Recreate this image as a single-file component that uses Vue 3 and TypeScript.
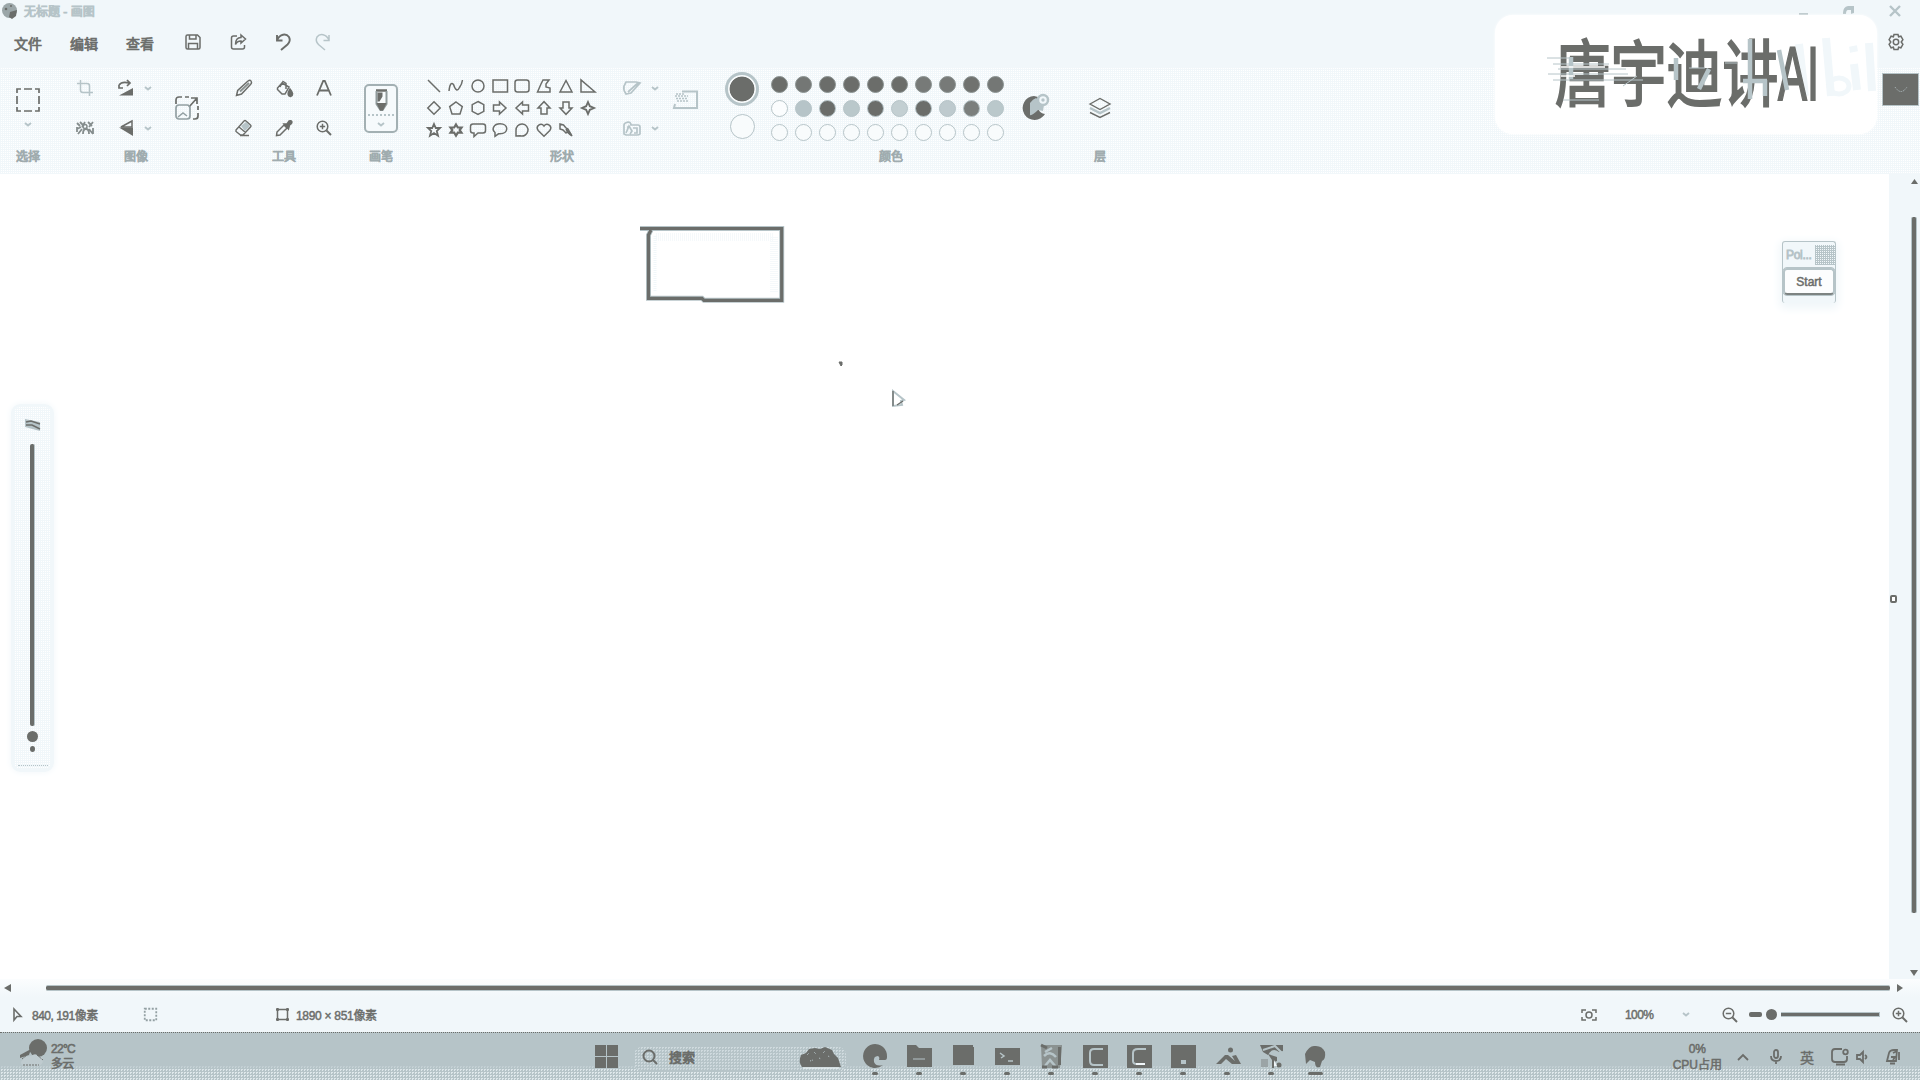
<script setup lang="ts">
interface Icon { w: number; h: number; body: string }

const mag = '<circle cx="6.5" cy="6.5" r="5.3"/><path d="M10.5 10.5L15 15" stroke-width="2"/>'
const dark = '#6b6d6a'
const soft = '#b6c4c8'
const pale = '#f1f7fa'

const icons: Record<string, Icon> = {
  save: { w: 16, h: 16, body: '<path d="M2.5 1h10l2.5 2.500v10q0 1.500-1.500 1.500h-11Q1 15 1 13.500v-11Q1 1 2.500 1zM4.500 1v4h6.500v-4M3.500 15V9.500h9V15"/>' },
  share: { w: 17, h: 16, body: '<path d="M7 2H3.500Q1.500 2 1.500 4v9q0 2 2 2h9q2 0 2-2v-2"/><path d="M11 1l4.500 4L11 9V7Q7 7 5.500 10.500 5.500 3.500 11 3.500z"/>' },
  undo: { w: 16, h: 18, body: '<path d="M2 2v5.500h5.500M2 7C5 1 11 0 14 4q2 4-1.500 7.500L6 17" stroke-width="1.900"/>' },
  redo: { w: 16, h: 18, body: '<path d="M14 2v5.500H8.500M14 7C11 1 5 0 2 4q-2 4 1.500 7.500L10 17"/>' },
  gear: { w: 18, h: 18, body: '<path d="M7 1.500h4l.6 2.300 2.300-.6 2 3.400L14.200 9l1.700 2.400-2 3.400-2.300-.6-.6 2.300H7l-.6-2.300-2.300.6-2-3.400L3.800 9 2.100 6.600l2-3.400 2.300.6z" stroke-width="1.500"/><circle cx="9" cy="9" r="2.700"/>' },
  select: { w: 24, h: 24, body: '<path d="M1 5V1h4M8 1h8M19 1h4v4M23 8v8M23 19v4h-4M16 23H8M5 23H1v-4M1 16V8" stroke-width="1.700"/>' },
  chev: { w: 8, h: 5, body: '<path d="M1 1l3 2.500L7 1"/>' },
  crop: { w: 16, h: 16, body: '<path d="M0 3.500h10q2.500 0 2.500 2.500v10M3.500 0v10q0 2.500 2.500 2.500h10"/>' },
  rotate: { w: 16, h: 16, body: '<path d="M1 5Q4 1 11 3M1 5v3h4M9 0l3 3-3 3" stroke-width="1.700"/><path d="M1 15.500h14V8z" fill="currentColor" stroke="none"/>' },
  nobg: { w: 18, h: 14, body: '<path d="M1 2l3 3M4 1l4 4M9 1l-3 5M12 1l4 4M17 1l-4 5M1 8l4-2M2 13l4-5M7 13q0-5 3-5t3 5M13 8l4 5M1 6v5M17 7v6" stroke-width="1.800"/><circle cx="9" cy="5.500" r="2"/>' },
  flip: { w: 15, h: 16, body: '<path d="M13 1L2 7h11z"/><path d="M0 7.500h14V16z" fill="currentColor" stroke="none"/>' },
  resize: { w: 24, h: 24, body: '<path d="M1 8V4q0-3 3-3h3M10 1h4M23 10v4M23 17v3q0 3-3 3h-2M14 11l8-9M16 2h6v6" stroke-width="1.700"/><rect x="1" y="9" width="14" height="14" rx="3" stroke="#93a0a3" stroke-width="1.700"/><path d="M3 21l5-4 4 3" stroke="#93a0a3"/>' },
  pencil: { w: 18, h: 18, body: '<path d="M1.500 16.500l1.200-5L13 2q3-2 3.500 1.500 0 1-.8 1.700L6.500 15z" stroke-width="1.500"/><path d="M5 12.500L14 4" stroke="#8b9392" stroke-width="2"/>' },
  bucket: { w: 17, h: 17, body: '<path d="M6 3l7 4-4 7H6L1.500 9.500V8zM4 7l3-5.500 3 2V9" stroke-width="1.500"/><path d="M14 9q5 6 .500 7.500-4.500-1-.500-7.500z" fill="currentColor"/>' },
  letter: { w: 16, h: 16, body: '<path d="M1 15.500L7.200 1h1.600L15 15.500M3.500 10.500h9" stroke-width="1.800"/>' },
  eraser: { w: 18, h: 18, body: '<path d="M6 7l5-4 4 4-5 5z" fill="#b6c4c8" stroke="none"/><path d="M1 11l8-9q1-1 2 0l4.500 4q1 1 0 2L8 16H5.500L1 12.500zM4 8l6.500 5.500M5 16.500h9" stroke-width="1.400"/>' },
  picker: { w: 18, h: 18, body: '<path d="M1.500 16.500l.5-3.500L9 6l3 3-7 7z"/><path d="M9 5l3 0 2-3q2-1 3 1 0 2-2.500 3l-1 4z" fill="currentColor"/>' },
  zoomin: { w: 16, h: 16, body: mag + '<path d="M3.800 6.500h5.400M6.500 3.800v5.400" stroke-width="1.500"/>' },
  zoomout: { w: 16, h: 16, body: mag + '<path d="M3.800 6.500h5.400"/>' },
  brush: { w: 15, h: 22, body: '<path d="M2 1.500h11" stroke-width="2.500"/><path d="M2.500 2v13L6.500 21h2l4-6V2" stroke="#8f9a9b" stroke-width="2"/><path d="M3.500 3.500h5v4l-3 5h-2zM2.500 14h10L9 21.500H6z" fill="currentColor" stroke="none"/>' },
  outline: { w: 18, h: 16, body: '<path d="M3 2h10l4 1-9 10-5 1Q0 10 1 6zM5 12l10-9" stroke-width="1.700"/>' },
  fill: { w: 18, h: 15, body: '<path d="M1 13V4q0-2 4-3 3 0 3 3h7q2 0 2 2v7q-1 1-3 1H3zM3 12l3-7 3 5-2 3M10 7h4v5h-3M4 6h3" stroke-width="1.700"/>' },
  size: { w: 26, h: 20, body: '<path d="M9 1.500h15v16.500H1l1-4" stroke-width="2"/><path d="M2 6h13M3 8.500h12M4 11h11M3 4h8" stroke-dasharray="2 1"/>' },
  edit: { w: 30, h: 30, body: '<path d="M14 3a12 12 0 1 0 11 18q-5-1-6-4V8q-2-1-1-4z" fill="#6b6d6a" stroke="none"/><path d="M10 22V10q3-4 6-5l8 7-1 6-5-1q-6 6-8 5z" fill="#b6c4c8" stroke="none"/><circle cx="23" cy="7" r="5" stroke="#b6c4c8" fill="#f1f7fa" stroke-width="2.500"/><circle cx="23" cy="7" r="1.700" fill="#b6c4c8" stroke="none"/>' },
  layers: { w: 22, h: 22, body: '<path d="M1 11l10 5 10-5" stroke="#b6c4c8" stroke-width="2.500"/><path d="M1 7l10-5.500L21 7l-10 5.500z" stroke-width="1.400"/><path d="M1 15.500l10 5 10-5" stroke-width="1.400"/>' },
  pointer: { w: 9, h: 13, body: '<path d="M1 1v11l3-3.500h4z" stroke-width="1.600"/>' },
  dotted: { w: 13, h: 13, body: '<rect x=".75" y=".75" width="11.500" height="11.500" stroke-width="1.800" stroke-dasharray="2 1.500"/>' },
  frame: { w: 13, h: 13, body: '<rect x="1.500" y="1.500" width="10" height="10"/><path d="M0 1.500h3M10 1.500h3M0 11.500h3M10 11.500h3M1.500 0v3M11.500 0v3M1.500 10v3M11.500 10v3" stroke-width="1.800"/>' },
  fit: { w: 16, h: 12, body: '<path d="M1 4V1h4M11 1h4v3M15 8v3h-4M5 11H1V8"/><circle cx="8" cy="6" r="3"/>' },
}

const swap = (b: string): Icon => ({ w: 16, h: 14, body: b })
const shapes: Icon[] = [
  '<path d="M2 1l12 12" />', '<path d="M1 12Q2 2 5.500 5.500q3 9 6 3Q14 5 14.500 1"/>', '<circle cx="8" cy="7" r="6"/>', '<rect x="1" y="1" width="14.500" height="12"/>',
  '<rect x="1" y="1" width="14" height="12" rx="2.500"/>', '<path d="M1.500 13l3.500-8 2-4h6L10 5v3l4 1v4z"/>', '<path d="M8 1.500L14 13H2z"/>', '<path d="M1 1v12h14z"/>',
  '<path d="M8 .800L14.200 7 8 13.200 1.800 7z"/>', '<path d="M8 1l6.300 4.600L12 13H4L1.700 5.600z"/>', '<path d="M8 .500l5.800 3.200v6.600L8 13.500l-5.800-3.200V3.700z"/>', '<path d="M1.500 4h6V1l6.500 6-6.500 6v-3h-6z"/>',
  '<path d="M14.500 4h-6V1L2 7l6.500 6v-3h6z"/>', '<path d="M5 13V7H2l6-6.300L14 7h-3v6z"/>', '<path d="M5 1v6H2l6 6.300L14 7h-3V1z"/>', '<path d="M8 1l1.800 4.200L14 7 9.800 8.800 8 13 6.200 8.800 2 7l4.200-1.800z" stroke-width="1.800"/>',
  '<path d="M8 1l1.800 4h4.200l-3.200 3 1.200 4.700L8 10l-4 2.700L5.200 8 2 5h4.200z" stroke-width="1.800"/>', '<path d="M8 1.500l1.800 3h3.700L11.700 7l1.800 2.700H9.800L8 12.700 6.200 9.700H2.500L4.300 7 2.500 4.500h3.700z" stroke-width="2.200"/>', '<path d="M3 1h10q2.500 0 2.500 2.500v4Q15.500 10 13 10H8l-4 3.500V10H3Q.5 10 .5 7.500v-4Q.5 1 3 1z"/>', '<path d="M8 .800c9 0 9 10 0 10H6.500L3 13.300V9.500C-1 6 2 .800 8 .800z"/>',
  '<path d="M2 13V7.500a6 6 0 1 1 4 5.200z"/>', '<path d="M8 13.200L2.200 7.500C-1 3 5-1 8 3c3-4 9 0 5.800 4.500z"/>', '<path d="M2 1l3.500 1L8 5l2 1 4 7-5-4-1 1-3-3-3-1z"/><path d="M8 6l5 6" stroke-width="2"/>',
].map(swap)

const tools = ['pencil', 'bucket', 'letter', 'eraser', 'picker', 'zoomin']
const swatches: { fill: string; line: string }[] = [
  ...[dark, '#747775', dark, dark, dark, dark, '#777a78', '#777a78', '#70726f', '#747775'].map(fill => ({ fill, line: '#8b9392' })),
  ...['#fbfdfe', '#b6c4c8', dark, '#bac8cb', dark, '#c3cfd2', dark, '#becace', '#7b7f7d', '#bac8cb'].map(fill => ({ fill, line: soft })),
  ...Array.from({ length: 10 }, () => ({ fill: '#f8fbfc', line: soft })),
]

const apps: { name: string; body: string; active?: boolean }[] = [
  { name: 'edge', body: `<path d="M24 13A12 12 0 1 0 20 21q-7 2-9-3-1-6 4-6 2 1 1 4h6q2 0 2-3z" fill="${dark}"/>` },
  { name: 'files', body: `<path d="M0 1h9l3 3h13v19H0z" fill="${dark}"/><path d="M6 15h12" stroke="${soft}"/>` },
  { name: 'store', body: `<path d="M2 3V1h20v2h1v18H2z" fill="${dark}"/>` },
  { name: 'mail', body: `<path d="M0 4h25v17H0z" fill="${dark}"/><path d="M5 9l4 3-3 2M13 17h5" stroke="${soft}" stroke-width="1.500" fill="none"/>` },
  { name: 'photos', body: `<path d="M2 1h21v3l-2 20H3z" fill="#8b9291"/><path d="M5 12Q11 6 17 13M6 8l7-4M6 22l5-6 6 7" stroke="${soft}" stroke-width="2.500" fill="none"/><path d="M20.500 3v18M2 1l6 3M3 23h5M13 23h6" stroke="${dark}" stroke-width="3"/>` },
  { name: 'recorder', body: `<path d="M0 1h25v23H0z" fill="${dark}"/><path d="M20 5h-9Q7 5 7 9v8q0 4 4 4h9" stroke="${soft}" stroke-width="2" fill="none"/>` },
  { name: 'camtasia', body: `<path d="M0 1h25v23H0z" fill="${dark}"/><path d="M19 5h-8Q6 5 6 9v8q0 3 4 3h8" stroke="${soft}" stroke-width="2" fill="none"/><path d="M9 20h9" stroke="${pale}" stroke-width="2"/>` },
  { name: 'ide', body: `<path d="M0 1h25v23H0z" fill="${dark}"/><path d="M10 16h5v4h-5z" fill="${soft}"/>` },
  { name: 'mountain', body: `<path d="M1 20l9-9h3l7 6-3-5 4-1 5 9h-9l-6-5-5 5z" fill="${dark}"/><circle cx="15.500" cy="6" r="2.500" fill="${dark}"/>` },
  { name: 'snip', body: `<path d="M1 1h23v6l-4 1q-7-5-11 3L4 8z" fill="${dark}"/><path d="M4 6L16 2l8 8" stroke="${soft}" stroke-width="2" fill="none"/><path d="M9 10l9 3v4l-3 1v6h-2v-8z" fill="${dark}"/><path d="M2 15h7v8H2z" fill="#9ba4a6"/><circle cx="20" cy="21" r="2.500" fill="${dark}"/><path d="M15 16l3 6h-3z" fill="${pale}"/>` },
  { name: 'paint', body: `<path d="M2 10Q6 2 11 2q8-1 11 6 1 7-3 9l-2 6q-5 2-5-5l-5-2-4 4z" fill="${dark}"/>`, active: true },
]
</script>

<template>
  <div class="desktop">
    <header class="title">
      <svg class="logo" width="17" height="17" viewBox="0 0 17 17"><circle cx="8.500" cy="8.500" r="7.500" fill="#9ba6a8" /><path d="M9 10l7-2-1 6-4 3-3-2z" :fill="dark" /><circle cx="5" cy="7" r="1.300" :fill="dark" /><circle cx="10" cy="4" r="1" :fill="dark" /></svg>
      <span class="name">无标题 - 画图</span>
      <div class="win">
        <svg width="10" height="12" viewBox="0 0 10 12"><path d="M0 8h9v2H0z" /></svg>
        <svg width="12" height="12" viewBox="0 0 12 12"><path d="M0 8q0-6 5-7h6v7l-3 1V5H5Q3 5 3 9H0z" /></svg>
        <svg width="12" height="12" viewBox="0 0 12 12"><path d="M1 1l10 10M11 1L1 11" :stroke="soft" stroke-width="2.400" /></svg>
      </div>
    </header>

    <nav class="menu">
      <span>文件</span><span>编辑</span><span>查看</span>
      <i v-for="n in ['save', 'share', 'undo', 'redo']" :key="n" :class="n">
        <svg class="ic" :width="icons[n].w" :height="icons[n].h" :viewBox="`0 0 ${icons[n].w} ${icons[n].h}`" v-html="icons[n].body" />
      </i>
      <i class="gear"><svg class="ic" width="18" height="18" viewBox="0 0 18 18" v-html="icons.gear.body" /></i>
    </nav>

    <section class="ribbon">
      <div class="group g-select">
        <div class="body col">
          <svg class="ic" width="24" height="24" viewBox="0 0 24 24" v-html="icons.select.body" />
          <svg class="ic chev low" width="8" height="5" viewBox="0 0 8 5" v-html="icons.chev.body" />
        </div>
        <label>选择</label>
      </div>
      <div class="group g-image">
        <div class="body">
          <div class="stack w30">
            <i v-for="n in ['crop', 'nobg']" :key="n" :class="n"><svg class="ic" :width="icons[n].w" :height="icons[n].h" :viewBox="`0 0 ${icons[n].w} ${icons[n].h}`" v-html="icons[n].body" /></i>
          </div>
          <div class="stack w30 gap11">
            <i v-for="n in ['rotate', 'flip']" :key="n"><svg class="ic" :width="icons[n].w" :height="icons[n].h" :viewBox="`0 0 ${icons[n].w} ${icons[n].h}`" v-html="icons[n].body" /></i>
          </div>
          <div class="stack w14">
            <i v-for="n in 2" :key="n"><svg class="ic chev" width="8" height="5" viewBox="0 0 8 5" v-html="icons.chev.body" /></i>
          </div>
          <i class="resize"><svg class="ic" width="24" height="24" viewBox="0 0 24 24" v-html="icons.resize.body" /></i>
        </div>
        <label>图像</label>
      </div>
      <div class="group g-tools">
        <div class="body toolgrid">
          <i v-for="n in tools" :key="n"><svg class="ic" :width="icons[n].w" :height="icons[n].h" :viewBox="`0 0 ${icons[n].w} ${icons[n].h}`" v-html="icons[n].body" /></i>
        </div>
        <label>工具</label>
      </div>
      <div class="group g-brush">
        <div class="body center">
          <div class="brushbox">
            <svg class="ic" width="15" height="22" viewBox="0 0 15 22" v-html="icons.brush.body" />
            <hr>
            <svg class="ic chev" width="8" height="5" viewBox="0 0 8 5" v-html="icons.chev.body" />
          </div>
        </div>
        <label>画笔</label>
      </div>
      <div class="group g-shapes">
        <div class="body">
          <div class="shapes">
            <i v-for="(s, k) in shapes" :key="k"><svg class="ic" width="16" height="14" viewBox="0 0 16 14" v-html="s.body" /></i>
          </div>
          <div class="stack outl">
            <i v-for="n in ['outline', 'fill']" :key="n"><svg class="ic" :width="icons[n].w" :height="icons[n].h" :viewBox="`0 0 ${icons[n].w} ${icons[n].h}`" v-html="icons[n].body" /></i>
          </div>
          <div class="stack outchev">
            <i v-for="n in 2" :key="n"><svg class="ic chev" width="8" height="5" viewBox="0 0 8 5" v-html="icons.chev.body" /></i>
          </div>
          <i class="size"><svg class="ic" width="26" height="20" viewBox="0 0 26 20" v-html="icons.size.body" /></i>
        </div>
        <label>形状</label>
      </div>
      <div class="group g-colors">
        <div class="body">
          <div class="current"><b class="one" /><b class="two" /></div>
          <div class="palette">
            <i v-for="(c, k) in swatches" :key="k"><b :style="{ background: c.fill, borderColor: c.line }" /></i>
          </div>
          <i class="edit"><svg width="30" height="30" viewBox="0 0 30 30" fill="none" v-html="icons.edit.body" /></i>
        </div>
        <label>颜色</label>
      </div>
      <div class="group g-layers">
        <div class="body center"><svg class="ic" width="22" height="22" viewBox="0 0 22 22" v-html="icons.layers.body" /></div>
        <label>层</label>
      </div>
      <div class="collapse"><svg width="14" height="8" viewBox="0 0 14 8"><path d="M1 1q6 9 12 0" fill="none" :stroke="soft" stroke-dasharray="1 1" /></svg></div>
    </section>

    <main class="work">
      <div class="canvas">
        <svg class="drawing" width="1889" height="803" viewBox="0 174 1889 803" fill="none">
          <path d="M640 228.500H781.700V300.300H704L702 298.300H648.500V235L651 230" :stroke="soft" stroke-width="5" />
          <path d="M640 228.500H781.700V300.300H704L702 298.300H648.500V235L651 230" :stroke="dark" stroke-width="3.200" />
          <path d="M656 237h118v55" :stroke="pale" stroke-width="8" stroke-dasharray="1 1" opacity=".7" />
          <path d="M655 236v56" :stroke="pale" stroke-width="3" stroke-dasharray="1 1" />
          <path d="M839 362h3v3l-1 1z" :fill="dark" :stroke="dark" />
          <path d="M893 391v15l9-1-1-4 3-1z" fill="#fff" :stroke="soft" stroke-width="2" />
          <path d="M893 391v15M897 405l6-4" :stroke="dark" stroke-width="1.300" />
        </svg>
        <aside class="thickness">
          <svg width="16" height="12" viewBox="0 0 16 12"><path d="M0 0l15 3v9L0 8z" :fill="soft" /><path d="M1 3l5-1 9 3M1 6l6 0 8 4" fill="none" :stroke="dark" stroke-width="1.500" /></svg>
          <div class="rail" /><div class="knob" /><div class="dot" /><div class="dots" />
        </aside>
        <div class="mini">
          <div class="mini-head"><span>Poi...</span><i /></div>
          <button>Start</button>
        </div>
      </div>
      <div class="vbar">
        <div class="handle" />
        <div class="vtrack">
          <svg width="7" height="5" viewBox="0 0 7 5"><path d="M3.500 0L7 5H0z" :fill="dark" /></svg>
          <div class="vthumb" />
          <svg width="8" height="6" viewBox="0 0 8 6"><path d="M0 0h8L4 6z" :fill="dark" /></svg>
        </div>
      </div>
    </main>
    <div class="hbar">
      <svg width="7" height="8" viewBox="0 0 7 8"><path d="M7 0v8L0 4z" :fill="dark" /></svg>
      <div class="hthumb" />
      <svg width="7" height="8" viewBox="0 0 7 8"><path d="M0 0v8l6-4z" :fill="dark" /></svg>
    </div>

    <footer class="status">
      <svg class="ic s-pointer" width="9" height="13" viewBox="0 0 9 13" v-html="icons.pointer.body" />
      <span class="pos">840, 191像素</span>
      <svg class="ic s-sel" width="13" height="13" viewBox="0 0 13 13" v-html="icons.dotted.body" />
      <svg class="ic s-frame" width="13" height="13" viewBox="0 0 13 13" v-html="icons.frame.body" />
      <span class="dim">1890 × 851像素</span>
      <div class="zoom">
        <svg class="ic" width="16" height="12" viewBox="0 0 16 12" v-html="icons.fit.body" />
        <span>100%</span>
        <svg class="ic chev" width="8" height="5" viewBox="0 0 8 5" v-html="icons.chev.body" />
        <svg class="ic z-out" width="16" height="16" viewBox="0 0 16 16" v-html="icons.zoomout.body" />
        <div class="dash" /><div class="zk" /><div class="zrail" />
        <svg class="ic z-in" width="16" height="16" viewBox="0 0 16 16" v-html="icons.zoomin.body" />
      </div>
    </footer>

    <div class="taskbar">
      <svg class="weather" width="27" height="30" viewBox="0 0 27 30"><circle cx="18" cy="9" r="9" :fill="dark" /><path d="M0 16l11-6-2 6-9 3z" :fill="dark" /><path d="M1 23q4-7 10-6 5-4 8 1 4-1 4 4-1 5-6 5H5q-4 0-4-4z" fill="#bfcbcf" /><path d="M2 20l5-4M17 16l6 5M3 26h16" :stroke="dark" stroke-dasharray="2 1" fill="none" /></svg>
      <div class="temp"><span>22°C</span><span>多云</span></div>
      <svg class="start" width="23" height="23" viewBox="0 0 23 23"><path d="M0 0h11v11H0zM12 0h11v11H12zM0 12h11v11H0zM12 12h11v11H12z" :fill="dark" /></svg>
      <div class="search">
        <svg width="16" height="16" viewBox="0 0 16 16" fill="none" :stroke="dark" stroke-width="2"><circle cx="7" cy="7" r="5.500" /><path d="M11 11l4 4" /></svg>
        <span>搜索</span>
        <svg class="hill" width="42" height="22" viewBox="0 0 42 22"><path d="M3 20Q-1 15 2 8l5-2 3-4 6-1 5 1 5-2 7 3 2 4 4 4 3 9z" :fill="dark" /><path d="M8 8l2-2M15 5l2 2M24 6l2-2M29 9l2 1M20 11l2 1M11 14l3-1" :stroke="soft" stroke-dasharray="1 1" /><path d="M4 21h36" :stroke="pale" stroke-width="1.200" /></svg>
      </div>
      <div class="apps">
        <div v-for="a in apps" :key="a.name" class="app">
          <svg width="25" height="25" viewBox="0 0 25 25" v-html="a.body" />
          <b :class="{ active: a.active }" />
        </div>
      </div>
      <div class="tray">
        <div class="cpu"><span>0%</span><span>CPU占用</span></div>
        <svg class="t-up" width="12" height="8" viewBox="0 0 12 8"><path d="M1 7l5-5 5 5" /></svg>
        <svg class="t-mic" width="12" height="15" viewBox="0 0 12 15"><rect x="4" y="1" width="4" height="8" rx="2" /><path d="M1 7q0 5 5 5t5-5M6 12v3" /></svg>
        <span class="ime">英</span>
        <svg class="t-pc" width="18" height="18" viewBox="0 0 18 18"><path d="M11 1H4Q1 1 1 4v7q0 3 3 3h9q3 0 3-3V8M5 16.500h9" /><circle cx="14.500" cy="4" r="2.300" /></svg>
        <svg class="t-vol" width="12" height="12" viewBox="0 0 12 12"><path d="M1 4h3l3-3v10L4 8H1zM9 4q3 2 0 4" /></svg>
        <svg class="t-bell" width="15" height="16" viewBox="0 0 15 16"><path d="M2 12L4 4q1-3 5-3h3l-1 11zM5 14.500h5M14 3v8M6 8h4l-2 3M8 4l4-2" /></svg>
      </div>
    </div>

    <div class="badge">
      <svg class="ghost" width="387" height="120" viewBox="0 0 387 120" fill="none">
        <path d="M306 30l6 52M333 24l5 58M361 50l3 26M360 32l1 6M376 29l3 48" :stroke="pale" stroke-width="8" />
        <ellipse cx="346" cy="72" rx="10" ry="8" :stroke="pale" stroke-width="5" />
      </svg>
      <span class="cjk">唐宇迪讲</span><span class="lat">AI</span>
      <svg class="streaks" width="387" height="120" viewBox="0 0 387 120" fill="none">
        <path d="M54 44h24M60 50h56M65 55h68M55 60h80M60 66h90M70 86h36M130 72l14-10M196 54h16M232 49h12" :stroke="soft" />
        <path d="M257 25v60M250 67h24M272 66v16M78 43v22M183 44v22M206 75l10-20M286 36l8 40" :stroke="soft" stroke-width="4.500" />
        <path d="M68 53h44M68 62h14" stroke="#fff" stroke-width="1.500" />
      </svg>
    </div>
  </div>
</template>

<style>
body { background: #f1f7fa; overflow: hidden; }
</style>

<style scoped>
.desktop { position: relative; width: 1920px; height: 1080px; display: flex; flex-direction: column; overflow: hidden; background: #f1f7fa; color: #6b6d6a; font-family: "Liberation Sans", "Noto Sans CJK SC", sans-serif; }
i { font-style: normal; display: flex; align-items: center; justify-content: center; }
b { display: block; box-sizing: border-box; }
svg { display: block; flex: none; overflow: visible; }
.ic { fill: none; stroke: currentColor; stroke-width: 1.5; }
.chev { color: #b6c4c8; stroke-width: 1.9; }
.title { height: 22px; display: flex; align-items: center; padding-left: 1px; flex: none; box-sizing: border-box; padding-bottom: 1px; }
.name { margin-left: 6px; font-size: 12px; color: #a9b7bb; -webkit-text-stroke: .9px #b6c4c8; white-space: nowrap; }
.win { margin-left: auto; display: flex; gap: 34px; padding-right: 19px; fill: #b6c4c8; }
.menu { height: 46px; flex: none; display: flex; box-sizing: border-box; padding: 0 15px 6px 14px; align-items: center; }
.menu span { font-size: 14px; width: 28px; margin-right: 28px; padding-top: 1px; -webkit-text-stroke: .7px #6b6d6a; }
.menu .save { width: 20px; margin-left: 1px; }
.menu .share { width: 20px; margin-left: 25px; }
.menu .undo { width: 20px; margin-left: 25px; }
.menu .redo { width: 20px; margin-left: 20px; color: #b6c4c8; }
.menu .gear { margin-left: auto; }
.ribbon { height: 106px; flex: none; display: flex; background: conic-gradient(#fff 25%, #f1f7fa 0) 0 0 / 2px 2px; }
.group { display: flex; flex-direction: column; align-items: center; }
.group .body { height: 80px; width: 100%; display: flex; }
.group label { height: 16px; line-height: 18px; font-size: 12px; color: #838d8d; -webkit-text-stroke: .8px #a0acaf; }
.g-select { width: 56px; } .g-image { width: 160px; } .g-tools { width: 136px; } .g-brush { width: 58px; }
.g-shapes { width: 304px; } .g-colors { width: 354px; } .g-layers { width: 64px; }
.col { flex-direction: column; align-items: center; padding-top: 20px; box-sizing: border-box; }
.low { margin-top: 10px; }
.center { align-items: center; justify-content: center; }
.stack { display: grid; grid-template-rows: 40px 40px; }
.g-image .body { padding-left: 14px; box-sizing: border-box; }
.w30 { width: 30px; } .gap11 { margin-left: 11px; } .w14 { width: 14px; }
.crop { color: #b6c4c8; } .nobg { color: #858d8d; }
.resize { width: 32px; margin-left: 16px; }
.toolgrid { display: grid !important; grid-template: 40px 40px / repeat(3, 40px); justify-content: center; }
.brushbox { width: 34px; height: 49px; box-sizing: border-box; border: 2px solid #a3b0b3; border-radius: 5px; display: flex; flex-direction: column; align-items: center; padding-top: 3px; background: #f6fafc; }
.brushbox hr { width: 26px; border: 0; border-top: 2px dotted #b6c4c8; margin: 3px 0 6px; }
.shapes { margin-left: 13px; display: grid; grid-template: repeat(3, 22px) / repeat(8, 22px); align-content: center; }
.outl { width: 24px; margin-left: 21px; color: #b6c4c8; }
.outchev { width: 14px; margin-left: 4px; }
.size { width: 26px; margin-left: 11px; color: #b6c4c8; padding-bottom: 16px; }
.current { width: 36px; margin-left: 10px; display: flex; flex-direction: column; align-items: center; padding-top: 4px; }
.one { width: 34px; height: 34px; border-radius: 50%; border: 3px solid #b6c4c8; background: radial-gradient(circle, #6b6d6a 12px, #f8fbfc 12.8px); }
.two { width: 25px; height: 25px; margin-top: 8px; border-radius: 50%; border: 1.5px solid #b6c4c8; background: #f8fbfc; }
.palette { margin-left: 7px; display: grid; grid-template: repeat(3, 24px) / repeat(10, 24px); align-content: center; }
.palette b { width: 17px; height: 17px; border: 1.6px solid; border-radius: 50%; }
.edit { width: 30px; margin-left: 13px; }
.collapse { margin: 5px 1px 0 auto; width: 37px; height: 33px; background: #6b6d6a; border: 1px solid #b6c4c8; box-sizing: border-box; display: flex; align-items: center; justify-content: center; }
.work { height: 805px; flex: none; display: flex; }
.canvas { width: 1889px; background: #fff; position: relative; }
.drawing { display: block; }
.thickness { position: absolute; left: 11px; top: 230px; width: 43px; height: 368px; box-sizing: border-box; border-radius: 9px; background: conic-gradient(#fff 25%, #f1f7fa 0) 0 0 / 2px 2px; border: 3px solid #f1f7fa; box-shadow: 0 0 7px #f1f7fa; display: flex; flex-direction: column; align-items: center; padding-top: 12px; }
.rail { width: 4px; height: 282px; margin-top: 13px; flex: none; background: #6b6d6a; border-right: 1.5px solid #b6c4c8; border-radius: 2px; }
.knob { width: 11px; height: 11px; margin-top: 5px; border-radius: 50%; background: #6b6d6a; flex: none; }
.dot { width: 5px; height: 6px; margin-top: 4px; border-radius: 50%; background: #6b6d6a; flex: none; }
.dots { width: 30px; margin-top: 13px; border-top: 1px dotted #b6c4c8; }
.mini { position: absolute; left: 1782px; top: 67px; width: 54px; height: 62px; background: #f1f7fa; box-shadow: 0 3px 8px 3px #f1f7fa; border: 1px solid #b6c4c8; border-bottom: 0; box-sizing: border-box; border-radius: 3px; }
.mini-head { height: 26px; display: flex; align-items: center; justify-content: space-between; padding-left: 3px; font-size: 12px; letter-spacing: -.3px; color: #a9b8bc; -webkit-text-stroke: .8px #b6c4c8; }
.mini-head i { width: 20px; height: 20px; background: conic-gradient(#f1f7fa 25%, #b6c4c8 0) 0 0 / 2px 2px; }
.mini button { display: block; width: 52px; height: 27px; box-sizing: border-box; background: #fcfdfe; border: 2px solid #b6c4c8; outline: 1px solid #b6c4c8; border-bottom-color: #7d8382; border-radius: 4px; color: #6b6d6a; font: 12px "Liberation Sans", sans-serif; -webkit-text-stroke: .5px #6b6d6a; padding: 0; }
.vbar { width: 31px; display: flex; justify-content: space-between; }
.handle { width: 7px; height: 8px; margin: 421px 0 0 1px; box-sizing: border-box; border: 2px solid #6b6d6a; border-radius: 2px; background: #fff; }
.vtrack { width: 12px; display: flex; flex-direction: column; align-items: center; padding-top: 5px; }
.vthumb { width: 4px; height: 696px; margin: 33px 0 57px; background: #6b6d6a; border: solid #b6c4c8; border-width: 0 1px; border-radius: 2px; }
.hbar { height: 18px; flex: none; display: flex; align-items: center; padding-left: 4px; background: linear-gradient(#fbfdfe, #f1f7fa); }
.hthumb { width: 1844px; height: 4px; margin: 0 7px 0 35px; box-sizing: content-box; background: #6b6d6a; border: solid #b6c4c8; border-width: 1px 0; border-radius: 2px; }
.status { height: 35px; flex: none; display: flex; align-items: center; font-size: 12px; white-space: nowrap; -webkit-text-stroke: .45px #6b6d6a; }
.s-pointer { margin-left: 13px; }
.pos { width: 66px; margin-left: 10px; letter-spacing: -.5px; }
.s-sel { margin-left: 46px; color: #93a0a3; }
.s-frame { margin-left: 119px; }
.dim { margin-left: 7px; letter-spacing: -.3px; }
.zoom { margin-left: auto; display: flex; align-items: center; padding-right: 12px; }
.zoom span { width: 28px; margin-left: 28px; letter-spacing: -.6px; }
.zoom .chev { margin-left: 29px; }
.z-out { margin-left: 32px; }
.dash { width: 13px; height: 5px; margin-left: 11px; border-radius: 2px; background: #6b6d6a; }
.zk { width: 11px; height: 11px; margin-left: 4px; border-radius: 50%; background: #6b6d6a; }
.zrail { width: 98px; height: 3px; margin-left: 4px; background: #6b6d6a; border: 1px solid #b6c4c8; border-left: 0; }
.z-in { margin-left: 12px; }
.taskbar { height: 48px; flex: none; display: flex; box-sizing: border-box; border-top: 1px dotted #6b6d6a; background: linear-gradient(#b6c4c8 32px, transparent 37px), conic-gradient(#dfe8eb 25%, #b6c4c8 0) 0 0 / 3px 3px; }
.weather { margin: 6px 0 0 20px; }
.temp { width: 40px; margin-left: 4px; padding-top: 9px; display: flex; flex-direction: column; font-size: 12px; line-height: 15px; letter-spacing: -.7px; -webkit-text-stroke: .6px #6b6d6a; }
.start { margin: 12px 0 0 504px; }
.search { width: 212px; height: 24px; margin: 14px 0 0 16px; display: flex; align-items: center; border-radius: 8px; box-sizing: border-box; padding-left: 8px; background: conic-gradient(#cfdade 25%, #b6c4c8 0) 0 0 / 3px 3px; }
.search span { font-size: 13px; margin: -6px 0 0 11px; -webkit-text-stroke: .8px #6b6d6a; }
.search svg { margin-top: -5px; }
.search .hill { margin: -2px 5px 0 auto; }
.apps { display: flex; margin-left: 7px; }
.app { width: 44px; display: flex; flex-direction: column; align-items: center; padding-top: 11px; }
.app b { width: 6px; height: 3px; border-radius: 2px; background: #6b6d6a; margin-top: 3px; }
.app b.active { width: 15px; }
.tray { margin-left: auto; display: flex; height: 47px; align-items: center; padding-right: 20px; }
.tray svg { fill: none; stroke: #6b6d6a; stroke-width: 1.8; }
.cpu { display: flex; flex-direction: column; align-items: center; font-size: 12px; line-height: 16px; -webkit-text-stroke: .5px #6b6d6a; }
.t-up { margin-left: 15px; } .t-mic { margin-left: 21px; }
.ime { font-size: 14px; margin-left: 18px; -webkit-text-stroke: .4px #6b6d6a; }
.t-pc { margin-left: 17px; } .t-vol { margin-left: 7px; } .t-bell { margin-left: 17px; }
.badge { position: absolute; left: 1495px; top: 15px; width: 382px; height: 119px; border-radius: 18px; background: #fff; box-shadow: 0 0 3px #fff; }
.badge svg { position: absolute; left: -2px; top: -1px; }
.badge .cjk, .badge .lat { position: absolute; line-height: 80px; white-space: nowrap; transform-origin: 0 0; }
.badge .cjk { left: 60px; top: 14px; font: 400 72px/80px "Noto Sans CJK SC", sans-serif; -webkit-text-stroke: 2.2px #6b6d6a; transform: scaleX(.775); }
.badge .lat { left: 283px; top: 19px; font: 400 76px/80px "Liberation Sans", sans-serif; -webkit-text-stroke: 2px #6b6d6a; transform: scaleX(.57); }
</style>
